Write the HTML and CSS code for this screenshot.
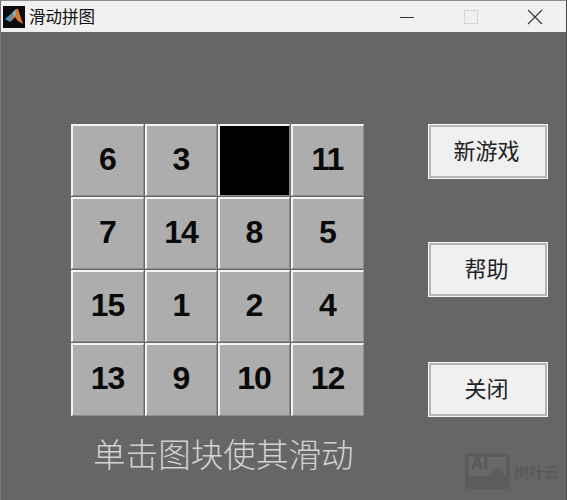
FILE: index.html
```html
<!DOCTYPE html>
<html lang="zh">
<head>
<meta charset="utf-8">
<title>滑动拼图</title>
<link rel="stylesheet" href="styles.css">
</head>
<body>
<div class="window">
  <header class="titlebar">
    <svg class="app-icon" width="22" height="22" viewBox="0 0 22 22">
      <rect width="22" height="22" fill="#0c0c10"/>
      <path d="M2 13 L9 7 L12 11 L7 16 Z" fill="#4f93b8"/>
      <path d="M7 16 L13 3 L15 3 L20 18 L15 15 L12 11 Z" fill="#d9772e"/>
      <path d="M9 7 L13 3 L12 11 Z" fill="#8fb6c4"/>
    </svg>
    <span class="title">滑动拼图</span>
    <div class="controls">
      <svg class="ctl ctl-min" width="16" height="16" viewBox="0 0 16 16"><path d="M1 8.5H15" stroke="#333" stroke-width="1"/></svg>
      <svg class="ctl ctl-max" width="16" height="16" viewBox="0 0 16 16"><rect x="1.5" y="1.5" width="13" height="13" fill="none" stroke="#d4d4d4"/></svg>
      <svg class="ctl ctl-close" width="16" height="16" viewBox="0 0 16 16"><path d="M1 1L15 15M15 1L1 15" stroke="#333" stroke-width="1.1"/></svg>
    </div>
  </header>
  <main class="panel">
    <div class="left">
      <div class="board">
        <div class="tile">6</div><div class="tile">3</div><div class="tile empty"></div><div class="tile">11</div>
        <div class="tile">7</div><div class="tile">14</div><div class="tile">8</div><div class="tile">5</div>
        <div class="tile">15</div><div class="tile">1</div><div class="tile">2</div><div class="tile">4</div>
        <div class="tile">13</div><div class="tile">9</div><div class="tile">10</div><div class="tile">12</div>
      </div>
      <p class="hint">单击图块使其滑动</p>
    </div>
    <div class="actions">
      <button class="btn">新游戏</button>
      <button class="btn btn-help">帮助</button>
      <button class="btn btn-close">关闭</button>
    </div>
    <div class="watermark">
      <svg width="45" height="36" viewBox="0 0 45 36">
        <rect width="45" height="36" rx="4" fill="#5c5c5c"/>
        <rect x="4" y="4" width="37" height="28" fill="#686868"/>
        <path d="M4 32V26C10 20 16 25 22 23C27 21 28 14 33 15C37 16 39 22 41 25V32Z" fill="#5c5c5c"/>
      </svg>
      <span class="wm-ai">AI</span>
      <span class="wm-text">树叶云</span>
    </div>
  </main>
</div>
</body>
</html>
```
FILE: styles.css
```css
* { box-sizing: border-box; }
html, body { margin: 0; padding: 0; }
body { width: 567px; height: 500px; overflow: hidden; background: #666; font-family: "Noto Sans CJK SC", "Liberation Sans", sans-serif; }
.window { width: 567px; height: 500px; display: flex; flex-direction: column; border-top: 1px solid #8a8a8a; border-right: 1px solid #444; border-left: 1px solid #777; }
.titlebar { height: 31px; flex: none; background: #f0f0f0; display: flex; align-items: center; padding-left: 2px; }
.app-icon { flex: none; margin-right: 3px; }
.title { margin-left: 1px; font-size: 16.5px; color: #111; line-height: 1; }
.controls { margin-left: auto; display: flex; align-items: center; padding-right: 23px; gap: 48px; }
.ctl { display: block; }
.panel { position: relative; flex: 1; background: #666; display: flex; padding: 92px 0 0 70px; }
.left { width: 293px; flex: none; display: flex; flex-direction: column; }
.board { display: grid; grid-template-columns: 73px 72px 72px 73px; grid-template-rows: 72px 72px 72px 73px; gap: 1px; }
.tile { background: #adadad; border-top: 2px solid #f4f4f4; border-left: 2px solid #f4f4f4; border-right: 1px solid #8c8c8c; border-bottom: 1px solid #8c8c8c; display: flex; align-items: center; justify-content: center; padding-bottom: 3px; padding-right: 1px; font-family: "Liberation Sans", sans-serif; font-weight: 700; font-size: 32px; letter-spacing: -1px; color: #0a0a0a; }
.tile.empty { background: #000; border-color: #f4f4f4 #8c8c8c #8c8c8c #f4f4f4; }
.hint { margin: 14px 0 0 22px; font-size: 32.6px; line-height: 46px; font-weight: 300; color: #d2d2d2; white-space: nowrap; }
.actions { margin-left: 64px; width: 120px; display: flex; flex-direction: column; }
.btn { width: 120px; height: 55px; flex: none; background: #f0f0f0; border: 1px solid #f7f7f7; outline: 2px solid #b4b4b4; outline-offset: -3px; font-family: "Noto Sans CJK SC", sans-serif; font-size: 22px; color: #222; padding: 0 3px 5px 0; }
.btn-help { margin-top: 63px; }
.btn-close { margin-top: 65px; }
.watermark { position: absolute; left: 464px; top: 421px; display: flex; align-items: center; gap: 4px; }
.wm-ai { position: absolute; left: 6px; top: 1px; font-family: "Liberation Sans", sans-serif; font-weight: 700; font-size: 17px; color: #585858; line-height: 20px; }
.wm-text { font-size: 15px; font-weight: 700; color: #5a5a5a; }
```
